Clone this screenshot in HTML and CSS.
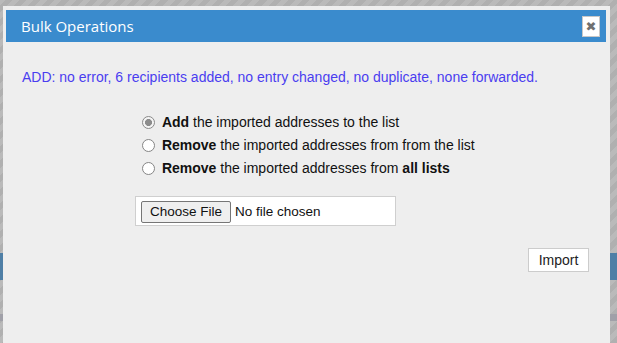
FILE: index.html
```html
<!DOCTYPE html>
<html>
<head>
<meta charset="utf-8">
<link rel="stylesheet" href="styles.css">
</head>
<body>
<div class="backdrop">
  <div class="bg-bar"></div>
  <div class="bg-band"></div>
</div>
<div class="dialog">
  <div class="titlebar">
    <span class="title">Bulk Operations</span>
    <button class="close" type="button">&#10006;</button>
  </div>
  <div class="content">
    <p class="message">ADD: no error, 6 recipients added, no entry changed, no duplicate, none forwarded.</p>
    <div class="options">
      <label class="opt"><input type="radio" name="op" checked> <b>Add</b> the imported addresses to the list</label>
      <label class="opt"><input type="radio" name="op"> <b>Remove</b> the imported addresses from from the list</label>
      <label class="opt"><input type="radio" name="op"> <b>Remove</b> the imported addresses from <b>all lists</b></label>
    </div>
    <div class="filebox">
      <span class="filebtn">Choose File</span>
      <span class="filename">No file chosen</span>
    </div>
    <div class="actions">
      <button class="import" type="button">Import</button>
    </div>
  </div>
</div>
</body>
</html>
```
FILE: styles.css
```css
html, body {
  margin: 0;
  padding: 0;
  width: 617px;
  height: 343px;
  overflow: hidden;
}
body {
  position: relative;
  font-family: "Liberation Sans", Arial, sans-serif;
  background: #b4b4b4;
}
.backdrop {
  position: absolute;
  inset: 0;
  background: repeating-linear-gradient(-45deg, #b0b0b0 0px, #b0b0b0 5px, #bababa 5px, #bababa 10px);
}
.bg-bar {
  position: absolute;
  left: 0;
  right: 0;
  top: 253px;
  height: 27px;
  background: #4f7fa6;
}
.bg-band {
  position: absolute;
  left: 0;
  right: 0;
  top: 314px;
  height: 7px;
  background: #a0a0a8;
}
.dialog {
  position: absolute;
  left: 3px;
  top: 6px;
  width: 600px;
  height: 333px;
  padding: 4px 4px 0 3px;
  background: #eeeeee;
  overflow: hidden;
}
.titlebar {
  height: 32px;
  background: #3a8bcd;
  display: flex;
  align-items: center;
  justify-content: space-between;
  padding: 0 6px 0 15px;
}
.title {
  color: #ffffff;
  font-family: "Open Sans", "Liberation Sans", sans-serif;
  font-size: 15px;
  padding-bottom: 1px;
}
.close {
  width: 18px;
  height: 21px;
  padding: 0;
  margin-top: 1px;
  background: #ffffff;
  border: 1px solid #c8c8c8;
  color: #707070;
  font-size: 13px;
  line-height: 19px;
  text-align: center;
  font-family: "DejaVu Sans", sans-serif;
}
.content {
  padding: 0 0 0 16px;
}
.message {
  margin: 27px 0 0 0;
  color: #4a3df0;
  font-size: 14px;
  line-height: 16px;
}
.options {
  margin: 29px 0 0 115px;
  display: flex;
  flex-direction: column;
  gap: 7px;
}
.opt {
  font-size: 14px;
  line-height: 16px;
  color: #111111;
  display: block;
}
.opt input {
  appearance: none;
  -webkit-appearance: none;
  box-sizing: border-box;
  margin: 0 3px 0 5px;
  width: 13px;
  height: 13px;
  vertical-align: -2px;
  border: 1px solid #858585;
  border-radius: 50%;
  background: #ffffff;
}
.opt input:checked {
  border-color: #8a8a8a;
  background: radial-gradient(circle, #8c8c8c 0, #8c8c8c 3.2px, #f4f4f4 3.8px);
}
.filebox {
  margin: 20px 0 0 113px;
  width: 254px;
  height: 28px;
  background: #ffffff;
  border: 1px solid #cfcfcf;
  display: flex;
  align-items: center;
  padding: 0 0 0 5px;
}
.filebtn {
  box-sizing: border-box;
  width: 90px;
  height: 22px;
  margin-top: 1px;
  background: #efefef;
  border: 1px solid #767676;
  border-radius: 2px;
  font-size: 13.5px;
  line-height: 20px;
  text-align: center;
  color: #111;
}
.filename {
  margin-left: 4px;
  font-size: 13.5px;
  color: #111;
}
.actions {
  display: flex;
  justify-content: flex-end;
  margin: 22px 17px 0 0;
}
.import {
  width: 61px;
  height: 24px;
  background: #ffffff;
  border: 1px solid #cccccc;
  font-family: "Liberation Sans", Arial, sans-serif;
  font-size: 14px;
  color: #222222;
  padding: 0;
}
```
